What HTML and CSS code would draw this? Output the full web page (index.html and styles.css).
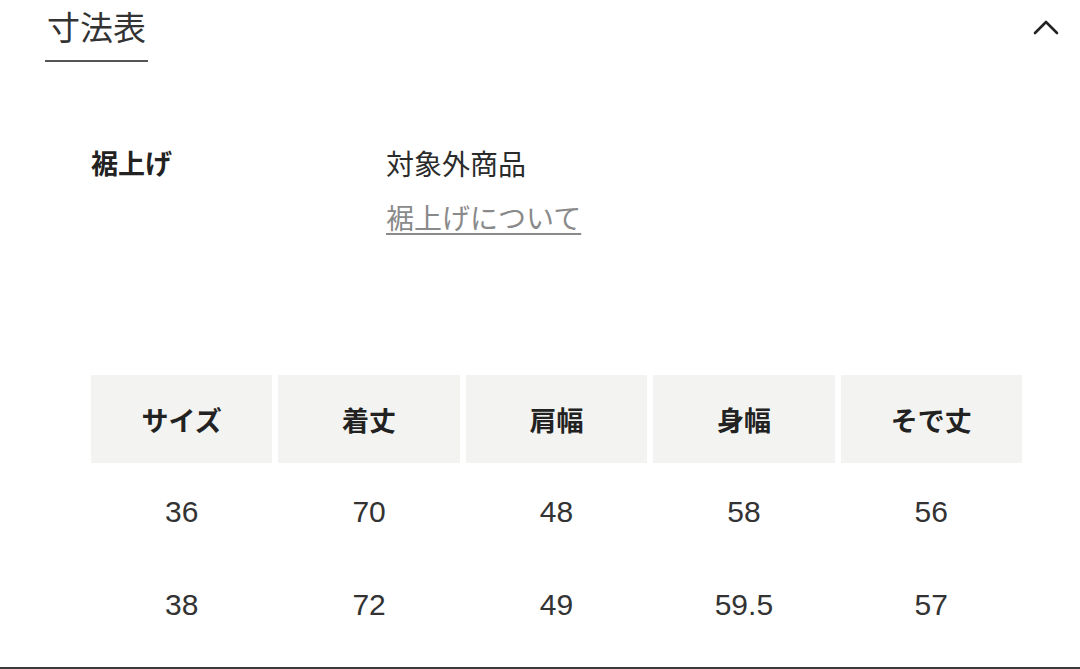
FILE: index.html
```html
<!DOCTYPE html>
<html lang="ja">
<head>
<meta charset="utf-8">
<link rel="stylesheet" href="styles.css">
</head>
<body>
<div class="page">
  <div class="head">
    <div class="tab">寸法表</div>
    <svg class="chev" width="26" height="16" viewBox="0 0 26 16"><path d="M2 14 L13 3 L24 14" fill="none" stroke="#222" stroke-width="2.6" stroke-linecap="round" stroke-linejoin="round"/></svg>
  </div>
  <div class="info">
    <div class="label">裾上げ</div>
    <div class="values">
      <div class="val">対象外商品</div>
      <a class="link">裾上げについて</a>
    </div>
  </div>
  <div class="table">
    <div class="th">サイズ</div>
    <div class="th">着丈</div>
    <div class="th">肩幅</div>
    <div class="th">身幅</div>
    <div class="th">そで丈</div>
    <div class="td">36</div>
    <div class="td">70</div>
    <div class="td">48</div>
    <div class="td">58</div>
    <div class="td">56</div>
    <div class="td">38</div>
    <div class="td">72</div>
    <div class="td">49</div>
    <div class="td">59.5</div>
    <div class="td">57</div>
  </div>
</div>
</body>
</html>
```

FILE: styles.css
```css
html, body {
  margin: 0;
  padding: 0;
  background: #fff;
}
body {
  font-family: "Noto Sans CJK JP", "Liberation Sans", sans-serif;
  color: #2b2b2b;
  width: 1080px;
  height: 669px;
  overflow: hidden;
}
.page {
  height: 667px;
  border-bottom: 2px solid #3a3a3a;
  box-sizing: content-box;
}
.head {
  display: flex;
  justify-content: space-between;
  align-items: flex-start;
  padding: 0 21px 0 45px;
}
.tab {
  font-size: 33px;
  line-height: 40px;
  padding: 6px 2px 14px 2px;
  border-bottom: 2px solid #555;
  color: #333;
  font-weight: 400;
}
.chev {
  margin-top: 19px;
}
.info {
  display: flex;
  padding: 81px 0 0 91px;
  height: 229px;
  box-sizing: border-box;
}
.label {
  width: 295px;
  font-size: 27px;
  font-weight: 700;
  line-height: 40px;
  color: #222;
}
.values {
  display: flex;
  flex-direction: column;
}
.val {
  font-size: 28px;
  line-height: 40px;
  color: #2b2b2b;
}
.link {
  font-size: 28px;
  line-height: 40px;
  margin-top: 14px;
  color: #8a8a8a;
  text-decoration: underline;
  text-underline-offset: 4px;
  text-decoration-thickness: 2px;
}
.table {
  margin: 84px 0 0 91px;
  width: 931px;
  display: grid;
  grid-template-columns: repeat(5, 1fr);
  column-gap: 6px;
  grid-template-rows: 88px 93px 93px;
}
.th {
  background: #f3f3f1;
  display: flex;
  align-items: center;
  justify-content: center;
  font-size: 27px;
  font-weight: 700;
  color: #222;
}
.td {
  display: flex;
  align-items: center;
  justify-content: center;
  padding-top: 4px;
  font-family: "Liberation Sans", Arial, sans-serif;
  font-size: 30px;
  color: #333;
}
```
